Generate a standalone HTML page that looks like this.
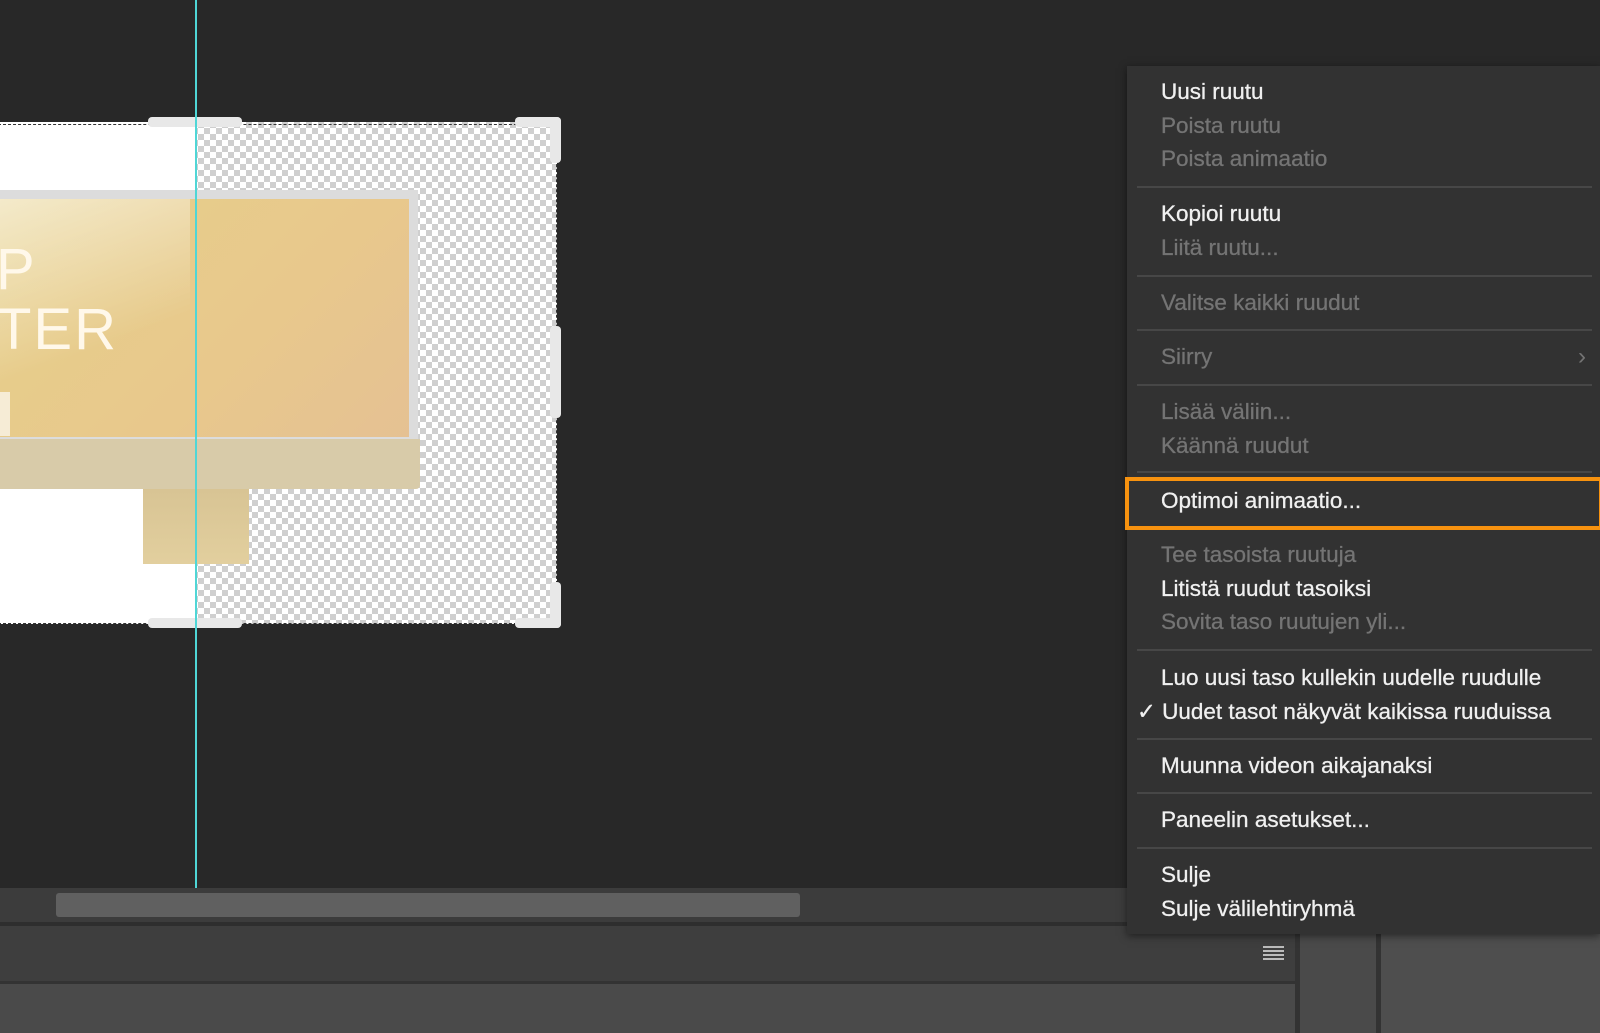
<!DOCTYPE html>
<html><head><meta charset="utf-8"><style>
*{margin:0;padding:0;box-sizing:border-box}
body{width:1600px;height:1033px;background:#282828;position:relative;overflow:hidden;font-family:"Liberation Sans",sans-serif}
.abs{position:absolute}
.checker{background-color:#fff;background-image:linear-gradient(45deg,#cfcfcf 25%,transparent 25%,transparent 75%,#cfcfcf 75%),linear-gradient(45deg,#cfcfcf 25%,transparent 25%,transparent 75%,#cfcfcf 75%);background-size:12px 12px;background-position:0 0,6px 6px}
.menu{left:1127px;top:66px;width:473px;height:868px;background:#323232;box-shadow:0 2px 8px rgba(0,0,0,.5)}
.it{position:absolute;left:34px;font-size:22.5px;line-height:34px;color:#f0f0f0;white-space:nowrap;-webkit-text-stroke:0.3px currentColor}
.d{color:#747474}
.sep{position:absolute;left:10px;right:8px;height:2px;background:#474747}
.h{background:#e8e8e8;border-radius:4px}
</style></head><body>
<div class="abs checker" style="left:0;top:122px;width:557px;height:502px"></div>
<div class="abs" style="left:0;top:122px;width:196px;height:502px;background:#fff"></div>
<div class="abs" style="left:0;top:190px;width:418px;height:250px;background:#dcdcdc"></div>
<div class="abs" style="left:0;top:199px;width:409px;height:238px;background:linear-gradient(135deg,#e6d08a,#e8c88c 60%,#e5c193)"></div>
<div class="abs" style="left:0;top:199px;width:190px;height:238px;background:linear-gradient(160deg,rgba(255,255,255,.55),rgba(255,255,255,0) 60%)"></div>
<div class="abs" style="left:0;top:439px;width:420px;height:50px;background:#d8cba9;border-radius:0 0 4px 0"></div>
<div class="abs" style="left:143px;top:489px;width:106px;height:75px;background:linear-gradient(#d8c494,#e2cf9e)"></div>
<div class="abs" style="left:-4px;top:240px;font-size:58px;color:#fff8ea;line-height:60px;letter-spacing:2px">P<br>TER</div>
<div class="abs" style="left:0;top:392px;width:10px;height:44px;background:#f6ecd6"></div>
<div class="abs" style="left:-2px;top:124px;width:559px;height:500px;border:1px dashed #333"></div>
<div class="abs h" style="left:148px;top:117px;width:94px;height:10px"></div>
<div class="abs h" style="left:148px;top:618px;width:94px;height:10px"></div>
<div class="abs h" style="left:515px;top:117px;width:46px;height:10px"></div>
<div class="abs h" style="left:550px;top:117px;width:11px;height:46px"></div>
<div class="abs h" style="left:515px;top:618px;width:46px;height:10px"></div>
<div class="abs h" style="left:550px;top:582px;width:11px;height:46px"></div>
<div class="abs h" style="left:550px;top:326px;width:11px;height:92px"></div>
<div class="abs" style="left:195px;top:0;width:2px;height:888px;background:#4fd6d6"></div>
<div class="abs" style="left:0;top:888px;width:1130px;height:34px;background:#3c3c3c"></div>
<div class="abs" style="left:56px;top:893px;width:744px;height:24px;background:#606060;border-radius:3px"></div>
<div class="abs" style="left:0;top:922px;width:1600px;height:4px;background:#2e2e2e"></div>
<div class="abs" style="left:0;top:926px;width:1295px;height:55px;background:#3e3e3e"></div>
<div class="abs" style="left:0;top:981px;width:1295px;height:3px;background:#333"></div>
<div class="abs" style="left:0;top:984px;width:1295px;height:49px;background:#4a4a4a"></div>
<div class="abs" style="left:1295px;top:926px;width:5px;height:107px;background:#333"></div>
<div class="abs" style="left:1300px;top:926px;width:76px;height:107px;background:#4a4a4a"></div>
<div class="abs" style="left:1376px;top:926px;width:5px;height:107px;background:#333"></div>
<div class="abs" style="left:1381px;top:926px;width:219px;height:107px;background:#4e4e4e"></div>
<div class="abs" style="left:1263px;top:946px;width:21px;height:15px;background:repeating-linear-gradient(#bbb 0 2px,transparent 2px 4px)"></div>
<div class="abs menu">
<div class="it" style="top:9px">Uusi ruutu</div>
<div class="it d" style="top:43px">Poista ruutu</div>
<div class="it d" style="top:76px">Poista animaatio</div>
<div class="sep" style="top:120px"></div>
<div class="it" style="top:131px">Kopioi ruutu</div>
<div class="it d" style="top:165px">Liitä ruutu...</div>
<div class="sep" style="top:209px"></div>
<div class="it d" style="top:220px">Valitse kaikki ruudut</div>
<div class="sep" style="top:263px"></div>
<div class="it d" style="top:274px">Siirry</div>
<div class="abs" style="left:451px;top:274px;font-size:24px;line-height:34px;color:#747474">›</div>
<div class="sep" style="top:318px"></div>
<div class="it d" style="top:329px">Lisää väliin...</div>
<div class="it d" style="top:363px">Käännä ruudut</div>
<div class="sep" style="top:405px"></div>
<div class="it" style="top:418px">Optimoi animaatio...</div>
<div class="it d" style="top:472px">Tee tasoista ruutuja</div>
<div class="it" style="top:506px">Litistä ruudut tasoiksi</div>
<div class="it d" style="top:539px">Sovita taso ruutujen yli...</div>
<div class="sep" style="top:583px"></div>
<div class="it" style="top:595px">Luo uusi taso kullekin uudelle ruudulle</div>
<div class="it" style="top:629px;left:10px">✓ Uudet tasot näkyvät kaikissa ruuduissa</div>
<div class="sep" style="top:672px"></div>
<div class="it" style="top:683px">Muunna videon aikajanaksi</div>
<div class="sep" style="top:726px"></div>
<div class="it" style="top:737px">Paneelin asetukset...</div>
<div class="sep" style="top:781px"></div>
<div class="it" style="top:792px">Sulje</div>
<div class="it" style="top:826px">Sulje välilehtiryhmä</div>
</div>
<div class="abs" style="left:1125px;top:477px;width:478px;height:53px;border:4px solid #f7920f"></div>
</body></html>
